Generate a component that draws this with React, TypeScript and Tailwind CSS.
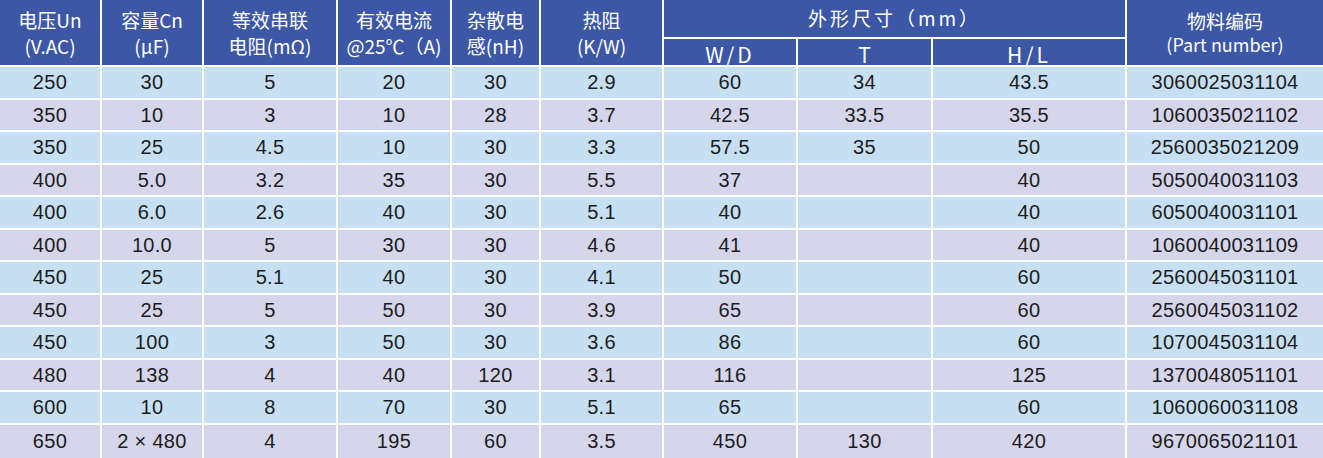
const rows = [
  ['250', '30', '5', '20', '30', '2.9', '60', '34', '43.5', '3060025031104'],
  ['350', '10', '3', '10', '28', '3.7', '42.5', '33.5', '35.5', '1060035021102'],
  ['350', '25', '4.5', '10', '30', '3.3', '57.5', '35', '50', '2560035021209'],
  ['400', '5.0', '3.2', '35', '30', '5.5', '37', '', '40', '5050040031103'],
  ['400', '6.0', '2.6', '40', '30', '5.1', '40', '', '40', '6050040031101'],
  ['400', '10.0', '5', '30', '30', '4.6', '41', '', '40', '1060040031109'],
  ['450', '25', '5.1', '40', '30', '4.1', '50', '', '60', '2560045031101'],
  ['450', '25', '5', '50', '30', '3.9', '65', '', '60', '2560045031102'],
  ['450', '100', '3', '50', '30', '3.6', '86', '', '60', '1070045031104'],
  ['480', '138', '4', '40', '120', '3.1', '116', '', '125', '1370048051101'],
  ['600', '10', '8', '70', '30', '5.1', '65', '', '60', '1060060031108'],
  ['650', '2 × 480', '4', '195', '60', '3.5', '450', '130', '420', '9670065021101']
];

// header cell base
const head =
  "bg-[#3d57a7] text-white flex flex-col items-center justify-center text-center font-['Noto_Sans_CJK_SC','Noto_Sans',sans-serif]";

const HeadCell = ({ lines }: { lines: string[] }) => (
  <div className={`${head} row-span-2 text-[19px] leading-[26px]`}>
    {lines.map((l) => (
      <div key={l}>{l}</div>
    ))}
  </div>
);

const SpecTable = () => {
  return (
    <main className="w-[1323px] h-[458px] bg-white overflow-hidden">
      <div className="grid grid-cols-[100px_100px_132px_112px_87px_121px_132px_133px_192px_196px] grid-rows-[37px_26px_repeat(11,30.5px)_33.5px] gap-[2px] bg-white">
        <HeadCell lines={['电压Un', '(V.AC)']} />
        <HeadCell lines={['容量Cn', '(μF)']} />
        <HeadCell lines={['等效串联', '电阻(mΩ)']} />
        <HeadCell lines={['有效电流', '@25℃（A)']} />
        <HeadCell lines={['杂散电', '感(nH)']} />
        <HeadCell lines={['热阻', '(K/W)']} />
        <div className={`${head} col-span-3 text-[19px] tracking-[3px]`}>外形尺寸（mm）</div>
        <div className={`${head} row-span-2 pb-[2px]`}>
          <div className="text-[19px] leading-[24px]">物料编码</div>
          <div className="text-[18px] leading-[22px]">(Part number)</div>
        </div>
        <div className={`${head} text-[21px] leading-[24px] tracking-[3px] pt-[3px]`}>W/D</div>
        <div className={`${head} text-[21px] leading-[24px] pt-[3px]`}>T</div>
        <div className={`${head} text-[21px] leading-[24px] tracking-[3px] pt-[3px]`}>H/L</div>

        {rows.map((row, i) =>
          row.map((cell, j) => (
            <div
              key={`${i}-${j}`}
              className={`flex items-center justify-center text-[20px] text-[#1c1c1c] tracking-[0.3px] font-['Liberation_Sans',Arial,sans-serif] ${
                i % 2 === 0 ? 'bg-[#c7dff3]' : 'bg-[#d5d6eb]'
              }`}
            >
              {cell}
            </div>
          ))
        )}
      </div>
    </main>
  );
};

export default SpecTable;
